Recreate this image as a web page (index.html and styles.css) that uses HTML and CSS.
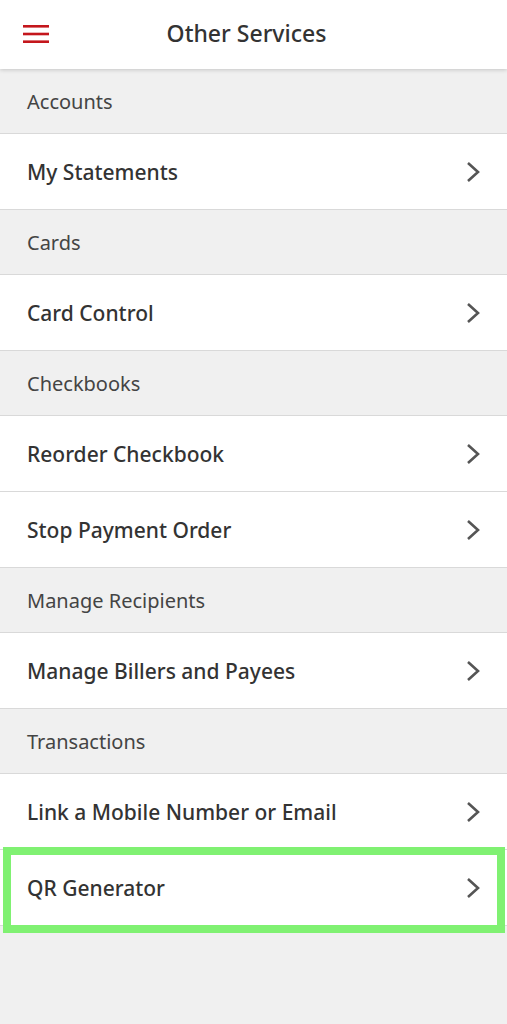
FILE: index.html
```html
<!DOCTYPE html>
<html lang="en">
<head>
    <meta charset="UTF-8">
    <meta name="viewport" content="width=device-width, initial-scale=1.0">
    <title>Other Services</title>
    <link rel="stylesheet" href="styles.css">
</head>
<body>

    <header class="topbar">
        <span class="menu-btn">
            <svg width="26" height="20" viewBox="0 0 26 20">
                <rect x="0" y="1" width="26" height="2.6" fill="#c4161c"/>
                <rect x="0" y="8.7" width="26" height="2.6" fill="#c4161c"/>
                <rect x="0" y="16.4" width="26" height="2.6" fill="#c4161c"/>
            </svg>
        </span>
        <h1>Other Services</h1>
    </header>

    <div class="list">
        <div class="section">Accounts</div>
        <div class="row"><span>My Statements</span><svg class="chev" width="14" height="22" viewBox="0 0 14 22"><polyline points="2,2 12,11 2,20"/></svg></div>

        <div class="section">Cards</div>
        <div class="row"><span>Card Control</span><svg class="chev" width="14" height="22" viewBox="0 0 14 22"><polyline points="2,2 12,11 2,20"/></svg></div>

        <div class="section">Checkbooks</div>
        <div class="row"><span>Reorder Checkbook</span><svg class="chev" width="14" height="22" viewBox="0 0 14 22"><polyline points="2,2 12,11 2,20"/></svg></div>
        <div class="row"><span>Stop Payment Order</span><svg class="chev" width="14" height="22" viewBox="0 0 14 22"><polyline points="2,2 12,11 2,20"/></svg></div>

        <div class="section">Manage Recipients</div>
        <div class="row"><span>Manage Billers and Payees</span><svg class="chev" width="14" height="22" viewBox="0 0 14 22"><polyline points="2,2 12,11 2,20"/></svg></div>

        <div class="section">Transactions</div>
        <div class="row"><span>Link a Mobile Number or Email</span><svg class="chev" width="14" height="22" viewBox="0 0 14 22"><polyline points="2,2 12,11 2,20"/></svg></div>
        <div class="row highlight"><span>QR Generator</span><svg class="chev" width="14" height="22" viewBox="0 0 14 22"><polyline points="2,2 12,11 2,20"/></svg></div>
    </div>

</body>
</html>
```

FILE: styles.css
```css
body {
    margin: 0;
    font-family: "Noto Sans", "Open Sans", sans-serif;
    background-color: #f0f0f0;
    color: #333;
}
.topbar {
    position: relative;
    height: 69px;
    background: white;
    display: flex;
    align-items: center;
    justify-content: center;
    box-shadow: 0px 1px 4px rgba(0, 0, 0, 0.18);
    z-index: 1;
}
.menu-btn {
    position: absolute;
    left: 23px;
    top: 24px;
    line-height: 0;
}
.topbar h1 {
    margin: 0 0 4px 0;
    font-size: 23px;
    font-weight: 500;
    color: #333;
    margin-right: 14px;
}
.list {
    padding-bottom: 60px;
}
.section {
    height: 64px;
    display: flex;
    align-items: center;
    padding-left: 27px;
    font-size: 20px;
    font-weight: 400;
    color: #444;
    background: #f0f0f0;
    border-bottom: 1px solid #d9d9d9;
}
.row {
    position: relative;
    height: 75px;
    display: flex;
    align-items: center;
    justify-content: space-between;
    padding: 0 27px 0 27px;
    font-size: 21px;
    font-weight: 500;
    color: #333;
    background: white;
    border-bottom: 1px solid #d9d9d9;
}
.chev polyline {
    fill: none;
    stroke: #555;
    stroke-width: 2.6;
}
.highlight::after {
    content: "";
    position: absolute;
    box-sizing: border-box;
    left: 3px;
    right: 2px;
    top: -3px;
    bottom: -8px;
    border: 8px solid #80f172;
    z-index: 2;
}
```
